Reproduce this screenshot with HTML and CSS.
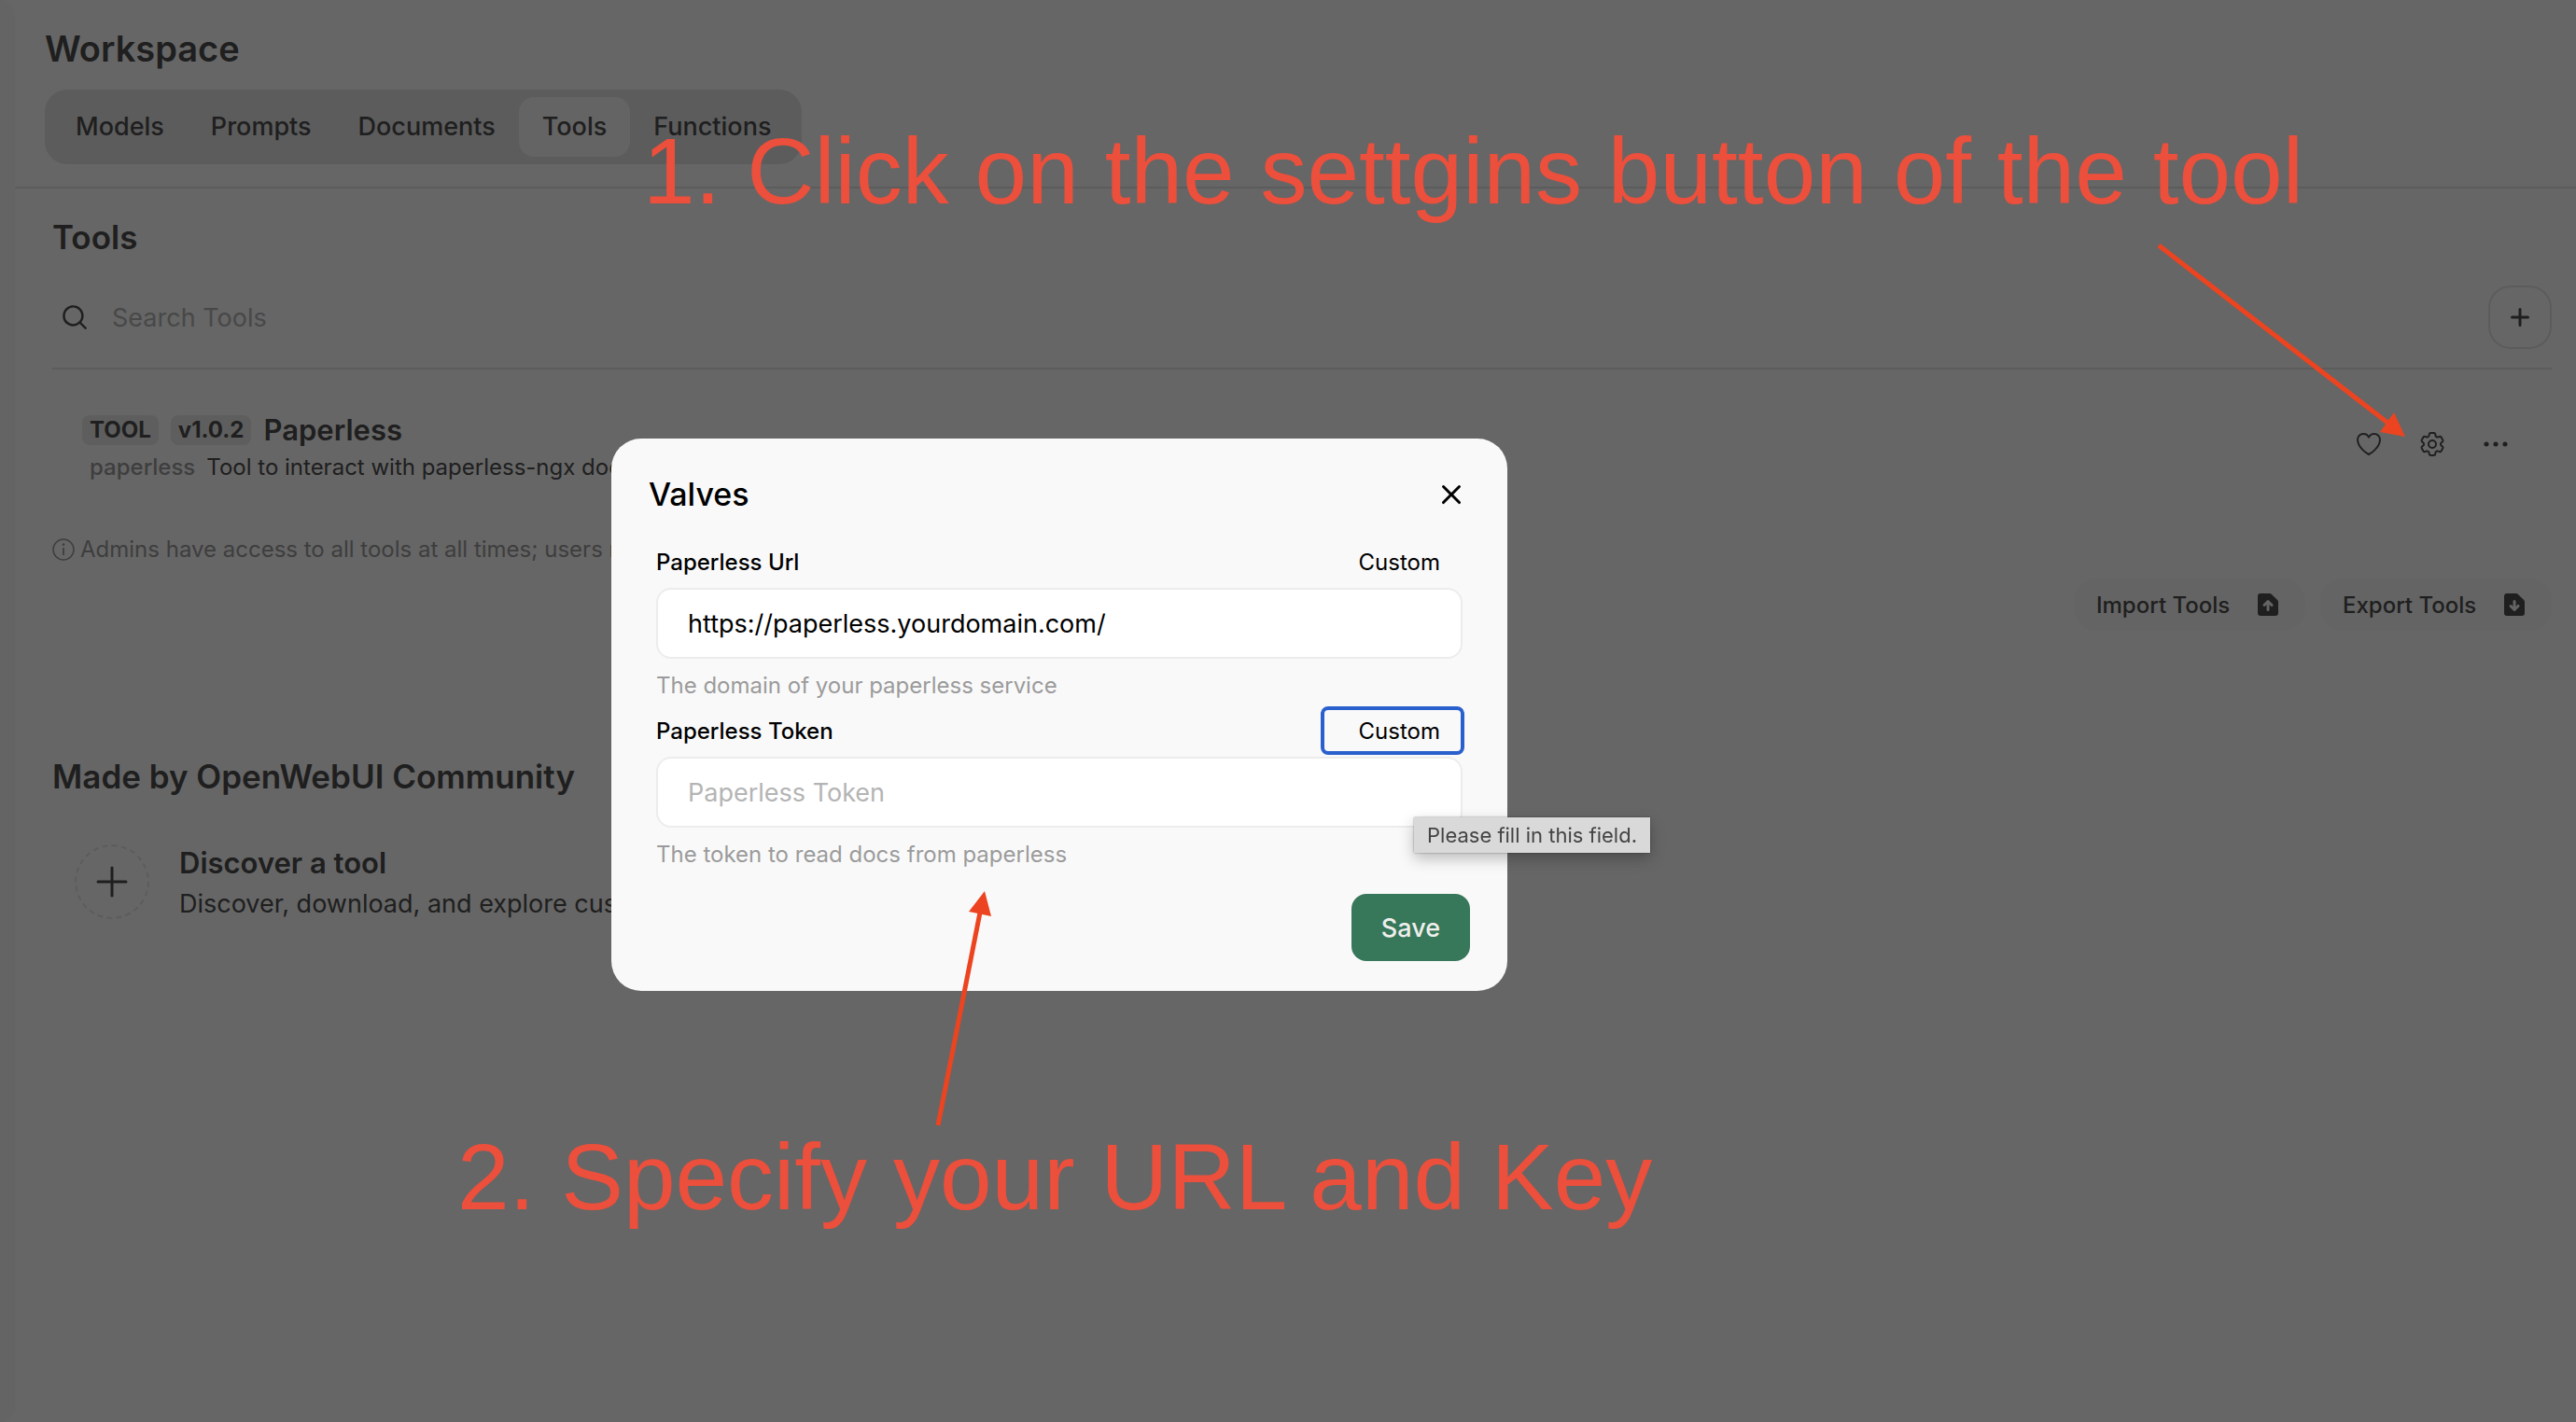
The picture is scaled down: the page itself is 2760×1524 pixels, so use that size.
FILE: index.html
```html
<!DOCTYPE html>
<html lang="en">
<head>
<meta charset="utf-8">
<title>Workspace - Tools</title>
<link rel="stylesheet" href="styles.css">
</head>
<body>
<div class="app">
  <aside class="sidebar"></aside>
  <main class="main">
    <header class="header">
      <h1 class="page-title">Workspace</h1>
      <nav class="tabs">
        <a class="tab" href="#models">Models</a>
        <a class="tab" href="#prompts">Prompts</a>
        <a class="tab" href="#documents">Documents</a>
        <a class="tab tab-active" href="#tools">Tools</a>
        <a class="tab" href="#functions">Functions</a>
      </nav>
    </header>
    <div class="content">
      <h2 class="section-title">Tools</h2>
      <div class="search-row">
        <svg class="icon-search" viewBox="0 0 20 20" fill="currentColor"><path fill-rule="evenodd" d="M9 3.5a5.5 5.5 0 100 11 5.500 5.500 0 000-11zM2 9a7 7 0 1112.452 4.391l3.328 3.329a.75.75 0 11-1.060 1.060l-3.329-3.328A7 7 0 012 9z" clip-rule="evenodd"/></svg>
        <input class="search-input" type="text" placeholder="Search Tools" aria-label="Search Tools">
        <button class="add-button" type="button" aria-label="Create tool">
          <svg class="icon-add" viewBox="0 0 16 16" fill="currentColor"><path d="M8.750 3.750a.75.75 0 0 0-1.500 0v3.500h-3.500a.75.75 0 0 0 0 1.500h3.500v3.500a.75.75 0 0 0 1.500 0v-3.500h3.500a.75.75 0 0 0 0-1.500h-3.500v-3.500Z"/></svg>
        </button>
      </div>
      <div class="tool">
        <div class="tool-text">
          <div class="tool-head">
            <span class="badge">TOOL</span>
            <span class="badge">v1.0.2</span>
            <span class="tool-name">Paperless</span>
          </div>
          <div class="tool-desc"><span class="tool-id">paperless</span><span>Tool to interact with paperless-ngx documents</span></div>
        </div>
        <div class="tool-actions">
          <button class="icon-button" type="button" aria-label="Support">
            <svg class="icon-action" viewBox="0 0 24 24" fill="none" stroke="currentColor" stroke-width="1.500" stroke-linecap="round" stroke-linejoin="round"><path d="M21 8.250c0-2.485-2.099-4.500-4.688-4.500-1.935 0-3.597 1.126-4.312 2.733-.715-1.607-2.377-2.733-4.313-2.733C5.100 3.750 3 5.765 3 8.250c0 7.220 9 12 9 12s9-4.780 9-12Z"/></svg>
          </button>
          <button class="icon-button" type="button" aria-label="Valves">
            <svg class="icon-action" viewBox="0 0 24 24" fill="none" stroke="currentColor" stroke-width="1.500" stroke-linecap="round" stroke-linejoin="round"><path d="M9.594 3.940c.09-.542.56-.94 1.110-.94h2.593c.55 0 1.020.398 1.110.94l.213 1.281c.063.374.313.686.645.870.074.040.147.083.220.127.325.196.720.257 1.075.124l1.217-.456a1.125 1.125 0 0 1 1.370.490l1.296 2.247a1.125 1.125 0 0 1-.26 1.431l-1.003.827c-.293.241-.438.613-.430.992a7.723 7.723 0 0 1 0 .255c-.008.378.137.750.430.991l1.004.827c.424.350.534.955.260 1.430l-1.298 2.247a1.125 1.125 0 0 1-1.369.491l-1.217-.456c-.355-.133-.750-.072-1.076.124a6.470 6.470 0 0 1-.220.128c-.331.183-.581.495-.644.869l-.213 1.281c-.090.543-.560.940-1.110.940h-2.594c-.550 0-1.019-.398-1.110-.940l-.213-1.281c-.062-.374-.312-.686-.644-.870a6.520 6.520 0 0 1-.220-.127c-.325-.196-.720-.257-1.076-.124l-1.217.456a1.125 1.125 0 0 1-1.369-.490l-1.297-2.247a1.125 1.125 0 0 1 .260-1.431l1.004-.827c.292-.240.437-.613.430-.991a6.932 6.932 0 0 1 0-.255c.007-.380-.138-.751-.430-.992l-1.004-.827a1.125 1.125 0 0 1-.260-1.430l1.297-2.247a1.125 1.125 0 0 1 1.370-.491l1.216.456c.356.133.751.072 1.076-.124.072-.044.146-.086.220-.128.332-.183.582-.495.644-.869l.214-1.280Z"/><path d="M15 12a3 3 0 1 1-6 0 3 3 0 0 1 6 0Z"/></svg>
          </button>
          <button class="icon-button" type="button" aria-label="More">
            <svg class="icon-more" viewBox="0 0 24 24" fill="currentColor"><circle cx="4.500" cy="12" r="1.900"/><circle cx="12" cy="12" r="1.900"/><circle cx="19.500" cy="12" r="1.900"/></svg>
          </button>
        </div>
      </div>
      <p class="note"><svg class="icon-info" viewBox="0 0 24 24" fill="none" stroke="currentColor"><circle cx="12" cy="12" r="11" stroke-width="1.500"/><path d="M12 10v8" stroke-width="1.800"/><circle cx="12" cy="6.600" r="1.300" fill="currentColor" stroke="none"/></svg><span>Admins have access to all tools at all times; users need tools assigned per model.</span></p>
      <div class="transfer">
        <button class="transfer-button" type="button">Import Tools
          <svg class="icon-file" viewBox="0 0 16 16" fill="currentColor"><path fill-rule="evenodd" d="M4 2a1.500 1.500 0 0 0-1.500 1.500v9A1.500 1.500 0 0 0 4 14h8a1.500 1.500 0 0 0 1.500-1.500V6.621a1.500 1.500 0 0 0-.440-1.060L9.940 2.439A1.500 1.500 0 0 0 8.878 2H4Zm4 9.500a.75.75 0 0 1-.75-.75V8.060l-.72.720a.75.75 0 0 1-1.060-1.060l2-2a.75.75 0 0 1 1.060 0l2 2a.75.75 0 1 1-1.060 1.060l-.720-.720v2.690a.75.75 0 0 1-.75.75Z"/></svg>
        </button>
        <button class="transfer-button" type="button">Export Tools
          <svg class="icon-file" viewBox="0 0 16 16" fill="currentColor"><path fill-rule="evenodd" d="M4 2a1.500 1.500 0 0 0-1.500 1.500v9A1.500 1.500 0 0 0 4 14h8a1.500 1.500 0 0 0 1.500-1.500V6.621a1.500 1.500 0 0 0-.440-1.060L9.940 2.439A1.500 1.500 0 0 0 8.878 2H4Zm4 3.500a.75.75 0 0 1 .75.75v2.690l.720-.720a.75.75 0 1 1 1.060 1.060l-2 2a.75.75 0 0 1-1.060 0l-2-2a.75.75 0 0 1 1.060-1.060l.720.720V6.250A.75.75 0 0 1 8 5.500Z"/></svg>
        </button>
      </div>
      <h2 class="section-title community-title">Made by OpenWebUI Community</h2>
      <a class="discover" href="#discover">
        <span class="discover-icon"><svg class="icon-plus" viewBox="0 0 24 24" fill="currentColor"><path fill-rule="evenodd" d="M12 3.750a.75.75 0 0 1 .75.75v6.750h6.750a.75.75 0 0 1 0 1.500h-6.750v6.750a.75.75 0 0 1-1.500 0v-6.750H4.500a.75.75 0 0 1 0-1.500h6.750V4.500a.75.75 0 0 1 .75-.75Z"/></svg></span>
        <span class="discover-text">
          <span class="discover-title">Discover a tool</span>
          <span class="discover-desc">Discover, download, and explore custom tools</span>
        </span>
      </a>
    </div>
  </main>
</div>

<div class="overlay">
  <section class="modal" role="dialog" aria-labelledby="valves-title">
    <div class="modal-header">
      <h2 class="modal-title" id="valves-title">Valves</h2>
      <button class="close-button" type="button" aria-label="Close">
        <svg class="icon-close" viewBox="0 0 20 20" fill="currentColor"><path d="M6.280 5.220a.75.75 0 00-1.060 1.060L8.940 10l-3.720 3.720a.75.75 0 101.060 1.060L10 11.060l3.720 3.720a.75.75 0 101.060-1.060L11.060 10l3.720-3.720a.75.75 0 00-1.060-1.060L10 8.940 6.280 5.220z"/></svg>
      </button>
    </div>
    <form class="form">
      <div class="field">
        <div class="field-head">
          <label class="field-label" for="url">Paperless Url</label>
          <button class="mode-button" type="button">Custom</button>
        </div>
        <input class="field-input" id="url" type="text" value="https://paperless.yourdomain.com/">
        <p class="field-help">The domain of your paperless service</p>
      </div>
      <div class="field">
        <div class="field-head">
          <label class="field-label" for="token">Paperless Token</label>
          <button class="mode-button mode-focused" type="button">Custom</button>
        </div>
        <div class="input-wrap">
          <input class="field-input" id="token" type="text" placeholder="Paperless Token">
          <div class="tooltip" role="tooltip">Please fill in this field.</div>
        </div>
        <p class="field-help">The token to read docs from paperless</p>
      </div>
      <button class="save-button" type="button">Save</button>
    </form>
  </section>
</div>

<div class="annotations">
  <p class="callout callout-one">1. Click on the settgins button of the tool</p>
  <svg class="arrow arrow-one" viewBox="0 0 270 212"><path d="M3 3 252 196" stroke="currentColor" stroke-width="5"/><path d="M267 208 255 182 240 203Z" fill="currentColor"/></svg>
  <svg class="arrow arrow-two" viewBox="0 0 64 256"><path d="M5 252 50 24" stroke="currentColor" stroke-width="5"/><path d="M55 1 38 23 62 28Z" fill="currentColor"/></svg>
  <p class="callout callout-two">2. Specify your URL and Key</p>
</div>
</body>
</html>
```
FILE: styles.css
```css
* { box-sizing: border-box; }

body {
  margin: 0;
  background: #fff;
  color: #4e4e4e;
  font-family: Inter, "Liberation Sans", sans-serif;
  font-size: 27px;
}

h1, h2, p { margin: 0; }
button, input { font: inherit; color: inherit; border: 0; background: none; padding: 0; outline: none; }
a { color: inherit; text-decoration: none; }
svg { display: block; flex: none; }

.app { display: flex; min-height: 100vh; background: #fff; }
.sidebar { flex: none; width: 16px; border-radius: 0 16px 16px 0; background: #f9f9f9; }
.main { flex: 1; min-width: 0; }

.header { padding: 24px 32px; border-bottom: 2px solid #e6e6e6; }
.page-title { font-size: 38px; line-height: 56px; font-weight: 600; }
.tabs { display: flex; width: fit-content; margin-top: 16px; padding: 8px; border-radius: 24px; background: #e6e6e6; }
.tab { padding: 0 25px; border-radius: 16px; line-height: 64px; font-weight: 500; }
.tab-active { background: #f9f9f9; }

.content { padding: 24px 26px 24px 40px; }
.section-title { font-size: 35px; line-height: 56px; font-weight: 600; }

.search-row { display: flex; align-items: center; margin-top: 24px; padding: 0 0 20px 8px; border-bottom: 2px solid #e6e6e6; }
.icon-search { width: 32px; height: 32px; }
.search-input { flex: 1; min-width: 0; height: 56px; margin-left: 24px; }
.search-input::placeholder { color: #b4b4b4; opacity: 1; }
.add-button { display: grid; place-items: center; width: 68px; height: 68px; border: 2px solid #e6e6e6; border-radius: 24px; }
.icon-add { width: 32px; height: 32px; }

.tool { display: flex; justify-content: space-between; align-items: flex-start; padding: 44px 26px 0 32px; }
.tool-head { display: flex; align-items: center; gap: 13px; height: 42px; }
.badge { padding: 0 8px; border-radius: 8px; background: #ececec; font-size: 24px; line-height: 32px; font-weight: 700; }
.tool-name { font-size: 31px; line-height: 40px; font-weight: 600; }
.tool-desc { display: flex; gap: 12px; padding-left: 8px; font-size: 24px; line-height: 38px; }
.tool-id { color: #9b9b9b; font-weight: 500; }
.tool-actions { display: flex; }
.icon-button { display: grid; place-items: center; width: 68px; height: 72px; }
.icon-action { width: 32px; height: 32px; }
.icon-more { width: 32px; height: 32px; }

.note { display: flex; align-items: center; gap: 6px; margin-top: 53px; color: #9b9b9b; font-size: 24px; line-height: 32px; }
.icon-info { width: 24px; height: 24px; }

.transfer { display: flex; justify-content: flex-end; gap: 16px; margin-top: 15px; }
.transfer-button { display: flex; align-items: center; justify-content: space-between; width: 248px; height: 56px; padding: 0 24px; border-radius: 24px; background: #f9f9f9; font-size: 24px; font-weight: 500; }
.icon-file { width: 32px; height: 32px; }

.community-title { margin-top: 128px; }
.discover { display: flex; align-items: center; gap: 32px; margin-top: 39px; padding-left: 24px; }
.discover-icon { display: grid; place-items: center; width: 80px; height: 80px; border: 2px dashed #e6e6e6; border-radius: 50%; }
.icon-plus { width: 48px; height: 48px; }
.discover-text { display: flex; flex-direction: column; padding-top: 4px; line-height: 44px; }
.discover-title { font-size: 31px; font-weight: 600; }

.overlay { position: fixed; inset: 0; display: flex; align-items: center; justify-content: center; padding: 8px 490px 0 0; background: rgba(0, 0, 0, 0.6); color: #000; }
.modal { width: 960px; padding: 32px 40px; border-radius: 32px; background: #f9f9f9; }
.modal-header { display: flex; align-items: center; justify-content: space-between; }
.modal-title { font-size: 34px; line-height: 56px; font-weight: 500; }
.icon-close { width: 40px; height: 40px; }
.form { display: flex; flex-direction: column; gap: 10px; margin-top: 22px; }
.field { padding: 0 8px; }
.field-head { display: flex; justify-content: space-between; align-items: center; height: 44px; margin-bottom: 6px; padding-right: 2px; font-size: 24px; }
.field-label { font-weight: 500; }
.mode-button { width: 146px; height: 44px; padding-right: 22px; border-radius: 4px; text-align: right; }
.mode-focused { outline: 4px solid #2a5fce; }
.input-wrap { position: relative; }
.field-input { display: block; width: 100%; height: 76px; padding: 0 32px; border: 2px solid #ececec; border-radius: 16px; background: #fff; }
.field-input::placeholder { color: #b4b4b4; opacity: 1; }
.field-help { margin-top: 13px; color: #9b9b9b; font-size: 24px; line-height: 32px; }
.tooltip { position: absolute; top: 65px; left: 812px; padding: 0 14px; background: #d9d9d9; color: #444; font-size: 22px; line-height: 38px; white-space: nowrap; box-shadow: 0 0 2px rgba(0, 0, 0, 0.4), 0 6px 16px rgba(0, 0, 0, 0.25); }
.save-button { align-self: flex-end; height: 72px; margin-top: 16px; padding: 0 32px; border-radius: 16px; background: #37775a; color: #efefec; font-weight: 500; }

.annotations { position: absolute; inset: 0; overflow: hidden; pointer-events: none; color: #ec4420; }
.callout { position: absolute; color: #ec4f3b; font-family: "Liberation Sans", sans-serif; font-size: 100px; line-height: 116px; white-space: nowrap; }
.callout-one { top: 125px; left: 689px; }
.callout-two { top: 1203px; left: 490px; }
.arrow { position: absolute; }
.arrow-one { top: 260px; left: 2310px; width: 270px; height: 212px; }
.arrow-two { top: 954px; left: 1000px; width: 64px; height: 256px; }
```
